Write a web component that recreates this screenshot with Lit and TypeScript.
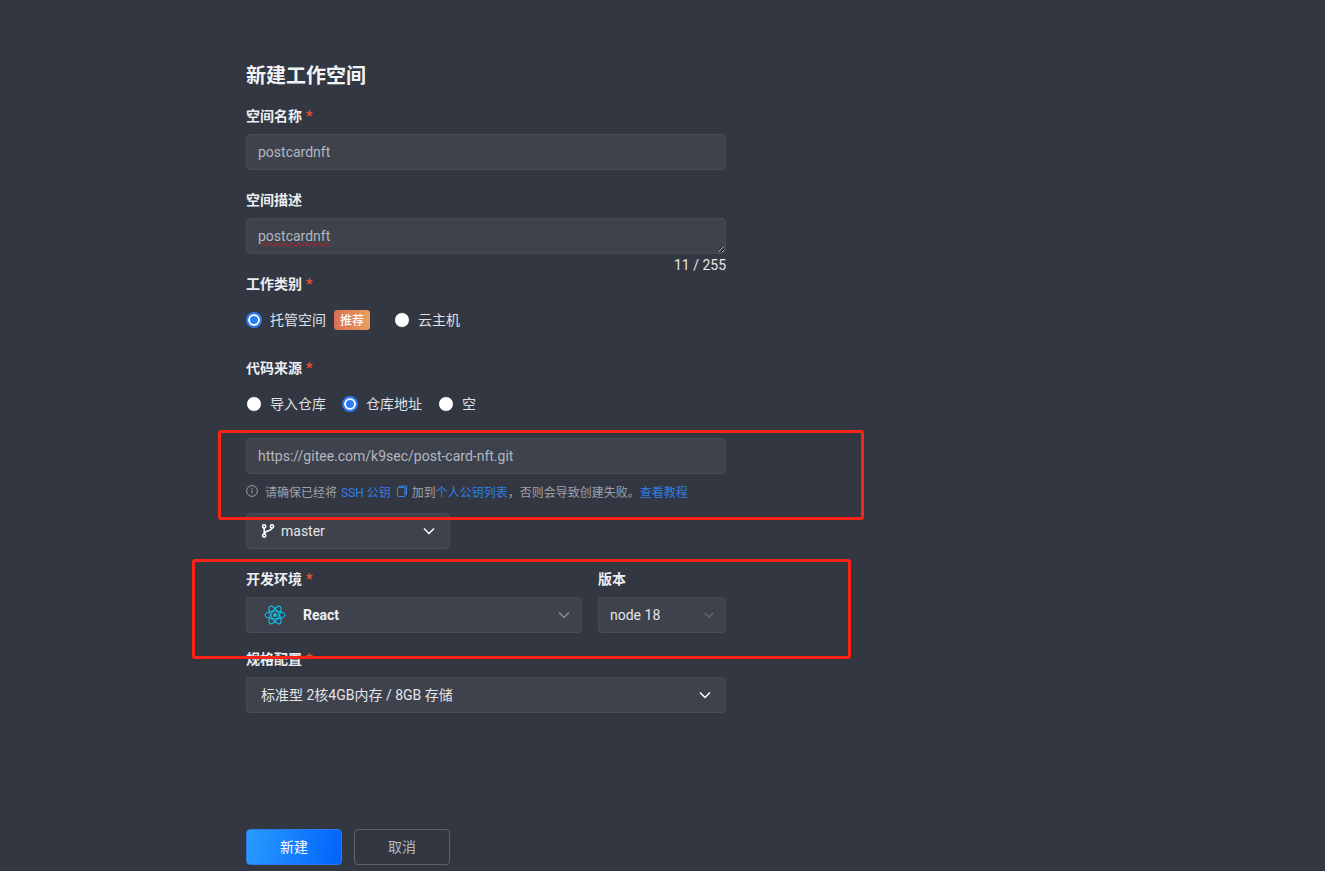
import { LitElement, html, css, svg } from 'lit';
import { customElement } from 'lit/decorators.js';

const chevron = (cls: string) => html`<svg class="chev ${cls}" viewBox="0 0 12 8" fill="none"><path d="M1 1.5 L6 6.5 L11 1.5" stroke="currentColor" stroke-width="1.5"/></svg>`;

const reactLogo = html`<svg class="react" viewBox="0 0 22 22" fill="none" stroke="#10bfe8" stroke-width="1.1">
  ${[0, 60, 120].map((r) => svg`<ellipse cx="11" cy="11" rx="10" ry="4" transform="rotate(${r} 11 11)"/>`)}
  <circle cx="11" cy="11" r="2" fill="#10bfe8" stroke="none"/>
</svg>`;

const branchIcon = html`<svg class="branch" viewBox="0 0 14 14" fill="none" stroke="#fff" stroke-width="1.6">
  <circle cx="3.2" cy="2.4" r="1.6"/><circle cx="3.2" cy="11.6" r="1.6"/><circle cx="11" cy="2.4" r="1.6"/>
  <path d="M3.2 4v6M11 4c0 3-7.8 2.4-7.8 6"/>
</svg>`;

const infoIcon = html`<svg class="info" viewBox="0 0 12 12" fill="none" stroke="#9a9da6"><circle cx="6" cy="6" r="5.4"/><path d="M6 5v3.6M6 3v1.2"/></svg>`;

const copyIcon = html`<svg class="copy" viewBox="0 0 12 12" fill="none" stroke="#3a86e8"><path d="M3.5 2.5V1h7v8H9"/><rect x="1.5" y="2.5" width="7.5" height="9" rx="1"/></svg>`;

@customElement('app-root')
export class AppRoot extends LitElement {
  static styles = css`
    :host {
      display: block;
      position: relative;
      height: 871px;
      overflow: hidden;
      background: #333742;
      color: #fff;
      font-family: Roboto, 'Noto Sans CJK SC', sans-serif;
      font-size: 14px;
    }
    .form {
      width: 480px;
      margin-left: 246px;
      padding-top: 62px;
      display: flex;
      flex-direction: column;
    }
    h1 {
      margin: 0 0 16px;
      font-size: 20px;
      line-height: 28px;
      font-weight: 700;
      color: #f2f3f5;
    }
    .label {
      line-height: 20px;
      height: 20px;
      font-weight: 700;
      font-size: 14px;
      color: #eceef1;
      margin-bottom: 8px;
    }
    .req {
      color: #f2502e;
      margin-left: 4px;
    }
    .item {
      margin-bottom: 20px;
    }
    .field {
      box-sizing: border-box;
      height: 36px;
      background: #3e424d;
      border: 1px solid #484c57;
      border-radius: 4px;
      padding: 0 11px;
      display: flex;
      align-items: center;
      line-height: 20px;
      color: #b4b7bf;
    }
    input.field {
      width: 100%;
      font: inherit;
      outline: none;
    }
    .area {
      resize: vertical;
      overflow: auto;
    }
    .squiggle {
      text-decoration: underline wavy #e80f0f 1px;
      text-underline-offset: 1px;
    }
    .count {
      height: 20px;
      line-height: 22px;
      text-align: right;
      font-size: 14px;
      color: #e6e7ea;
    }
    .radios {
      display: flex;
      align-items: center;
      height: 36px;
      margin-bottom: 20px;
    }
    .radios.tight {
      margin-bottom: 16px;
    }
    .radio {
      display: flex;
      align-items: center;
      gap: 8px;
      line-height: 20px;
      color: #dfe1e5;
    }
    .dot {
      box-sizing: border-box;
      width: 16px;
      height: 16px;
      border-radius: 50%;
      background: #fff;
      border: 1px solid #333742;
    }
    .dot.on {
      border: 2px solid #2d7bf0;
      background: #2d7bf0;
      box-shadow: inset 0 0 0 2px #fff;
    }
    .g16 {
      margin-left: 16px;
    }
    .g24 {
      margin-left: 24px;
    }
    .badge {
      margin-left: 8px;
      width: 36px;
      height: 20px;
      line-height: 22px;
      border-radius: 3px;
      text-align: center;
      font-size: 12px;
      font-weight: 500;
      color: #fff;
      background: linear-gradient(90deg, #da6d58, #e8a15c);
    }
    .hint {
      display: flex;
      align-items: center;
      height: 20px;
      margin: 7px 0 12px;
      font-size: 12px;
      color: #9ea1aa;
      white-space: nowrap;
    }
    .info {
      width: 12px;
      height: 12px;
      margin-right: 7px;
    }
    .copy {
      width: 12px;
      height: 12px;
      margin: 0 4px 0 5px;
    }
    .link {
      color: #2f7fe6;
    }
    .ssh {
      margin-left: 4px;
    }
    .select {
      justify-content: space-between;
      padding: 0 14px;
      color: #e4e5e9;
      flex-shrink: 0;
    }
    .left {
      display: flex;
      align-items: center;
    }
    .chev {
      width: 12px;
      height: 8px;
      color: #fff;
    }
    .chev.dim {
      color: #888b94;
    }
    .chev.dimmer {
      width: 10px;
      color: #6d707a;
    }
    .branch {
      width: 14px;
      height: 14px;
      margin-right: 6px;
    }
    .master {
      width: 204px;
      margin-bottom: 20px;
    }
    .env {
      display: flex;
      gap: 16px;
      margin-bottom: 16px;
    }
    .env .grow {
      width: 336px;
    }
    .env .ver {
      width: 128px;
    }
    .env .grow .select {
      padding: 0 11px 0 17px;
    }
    .env .ver .select {
      padding: 0 11px;
    }
    .react {
      width: 22px;
      height: 22px;
      margin-right: 17px;
    }
    .bold {
      font-weight: 700;
      color: #f0f1f3;
    }
    .spec {
      margin-bottom: 116px;
    }
    .actions {
      display: flex;
      gap: 12px;
    }
    .btn {
      box-sizing: border-box;
      width: 96px;
      height: 36px;
      line-height: 34px;
      text-align: center;
      border-radius: 4px;
      font-size: 14px;
    }
    .primary {
      color: #fff;
      border: 1px solid #2a7bf0;
      background: linear-gradient(100deg, #2a9bff, #0063fb);
    }
    .ghost {
      color: #b4b7bf;
      border: 1px solid #5e626d;
    }
    .mark {
      position: absolute;
      box-sizing: border-box;
      border: 3px solid #fb2216;
      border-radius: 3px;
      pointer-events: none;
    }
    .mark.repo {
      left: 218px;
      top: 430px;
      width: 646px;
      height: 90px;
    }
    .mark.env-box {
      left: 192px;
      top: 559px;
      width: 659px;
      height: 100px;
    }
  `;

  render() {
    return html`
      <div class="form">
        <h1>新建工作空间</h1>

        <div class="item">
          <div class="label">空间名称<span class="req">*</span></div>
          <input class="field" .value=${'postcardnft'} spellcheck="false" />
        </div>

        <div class="label">空间描述</div>
        <div class="field area"><span class="squiggle">postcardnft</span></div>
        <div class="count">11 / 255</div>

        <div class="label">工作类别<span class="req">*</span></div>
        <div class="radios">
          <label class="radio"><span class="dot on"></span>托管空间</label>
          <span class="badge">推荐</span>
          <label class="radio g24"><span class="dot"></span>云主机</label>
        </div>

        <div class="label">代码来源<span class="req">*</span></div>
        <div class="radios tight">
          <label class="radio"><span class="dot"></span>导入仓库</label>
          <label class="radio g16"><span class="dot on"></span>仓库地址</label>
          <label class="radio g16"><span class="dot"></span>空</label>
        </div>

        <input class="field" .value=${'https://gitee.com/k9sec/post-card-nft.git'} spellcheck="false" />
        <div class="hint">
          ${infoIcon}<span>请确保已经将</span><span class="link ssh">SSH 公钥</span>${copyIcon}<span>加到</span><span class="link">个人公钥列表</span><span>，否则会导致创建失败。</span><span class="link">查看教程</span>
        </div>

        <div class="field select master">
          <span class="left">${branchIcon}master</span>${chevron('')}
        </div>

        <div class="env">
          <div class="grow">
            <div class="label">开发环境<span class="req">*</span></div>
            <div class="field select">
              <span class="left">${reactLogo}<span class="bold">React</span></span>${chevron('dim')}
            </div>
          </div>
          <div class="ver">
            <div class="label">版本</div>
            <div class="field select">
              <span class="left">node 18</span>${chevron('dimmer')}
            </div>
          </div>
        </div>

        <div class="spec">
          <div class="label">规格配置<span class="req">*</span></div>
          <div class="field select">
            <span class="left">标准型 2核4GB内存 / 8GB 存储</span>${chevron('')}
          </div>
        </div>

        <div class="actions">
          <div class="btn primary">新建</div>
          <div class="btn ghost">取消</div>
        </div>
      </div>

      <div class="mark repo"></div>
      <div class="mark env-box"></div>
    `;
  }
}
